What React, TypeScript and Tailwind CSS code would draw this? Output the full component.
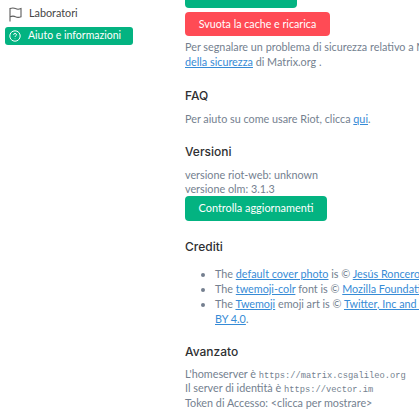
import React from 'react';

const link = "text-[#368bd6] underline";
const heading = "font-['Inter',sans-serif] text-[12px] leading-[18px] font-medium text-[#2e2f32]";
const mono = "font-['Liberation_Mono',monospace] text-[8.75px] leading-none";

function SideItem({ label, active, icon }: { label: string; active?: boolean; icon: React.ReactNode }) {
  return (
    <div className={`flex items-center h-[18px] rounded-[3px] pl-[4px] gap-[7px] ${active ? 'bg-[#03b381] text-white' : 'text-[#454545]'}`}>
      {icon}
      <span className={`${active ? 'text-[10.5px]' : 'text-[10.8px]'} whitespace-nowrap`}>{label}</span>
    </div>
  );
}

export default function App() {
  return (
    <div className="flex w-[419px] h-[418px] overflow-hidden bg-white font-['Lato',sans-serif]">
      {/* left panel */}
      <div className="w-[185px] shrink-0 pl-[5px] pr-[52px] pt-[4px] flex flex-col gap-[5px]">
        <SideItem
          label="Laboratori"
          icon={
            <svg width="13" height="15" viewBox="0 0 13 15" fill="none" stroke="#5c5c5c" strokeWidth="1.1" className="mt-[2px]">
              <path d="M1 14.5V1.5C3 .8 5 .8 6.5 1.6c1.6.8 3.4.8 5.5 0v8.2c-2 .8-3.9.8-5.5 0C5 9 3 9 1 9.8" />
            </svg>
          }
        />
        <SideItem
          active
          label="Aiuto e informazioni"
          icon={
            <svg width="12" height="12" viewBox="0 0 12 12" fill="none" stroke="white" strokeWidth="1">
              <circle cx="6" cy="6" r="5.2" />
              <path d="M4.6 4.8c0-1.8 2.9-1.8 2.9 0 0 1-1.5 1-1.5 2.1" />
              <circle cx="6" cy="8.6" r=".4" fill="white" stroke="none" />
            </svg>
          }
        />
      </div>

      {/* main content, scrolled */}
      <div className="flex-1 min-w-0 mt-[-16px] text-[10.8px] leading-[14.5px] text-[#747f8f]">
        <div className="h-[24px] w-[112px] rounded-[4px] bg-[#03b381]" />
        <button className="mt-[4px] block h-[24px] w-[145px] rounded-[4px] bg-[#ff4b55] text-white text-center text-[10.7px]">
          Svuota la cache e ricarica
        </button>
        <div className="mt-[4px] w-[300px]">
          <div className="whitespace-nowrap">Per segnalare un problema di sicurezza relativo a Matrix, leggi la</div>
          <div className="whitespace-nowrap">
            <a className={link}>della sicurezza</a> di Matrix.org .
          </div>
        </div>

        <h3 className={`${heading} mt-[18px]`}>FAQ</h3>
        <p className="mt-[7px] whitespace-nowrap">
          Per aiuto su come usare Riot, clicca <a className={link}>qui</a>.
        </p>

        <h3 className={`${heading} mt-[16px]`}>Versioni</h3>
        <div className="mt-[7px]">versione riot-web: unknown</div>
        <div>versione olm: 3.1.3</div>
        <button className="mt-[-1px] block h-[25px] w-[142px] rounded-[4px] bg-[#03b381] text-white text-center text-[10.9px]">
          Controlla aggiornamenti
        </button>

        <h3 className={`${heading} mt-[17px]`}>Crediti</h3>
        <ul className="mt-[10px] ml-[30px] w-[300px] list-disc leading-[15px] marker:text-[#747f8f]">
          <li className="whitespace-nowrap">
            The <a className={link}>default cover photo</a> is © <a className={link}>Jesús Roncero</a> used under the terms
          </li>
          <li className="whitespace-nowrap">
            The <a className={link}>twemoji-colr</a> font is © <a className={link}>Mozilla Foundation</a> used under the terms
          </li>
          <li>
            <div className="whitespace-nowrap">
              The <a className={link}>Twemoji</a> emoji art is © <a className={link}>Twitter, Inc and other contributors</a>
            </div>
            <div>
              <a className={link}>BY 4.0</a>.
            </div>
          </li>
        </ul>

        <h3 className={`${heading} mt-[17px]`}>Avanzato</h3>
        <div className="mt-[6px] whitespace-nowrap">
          L'homeserver è <span className={mono}>https://matrix.csgalileo.org</span>
        </div>
        <div className="whitespace-nowrap">
          Il server di identità è <span className={mono}>https://vector.im</span>
        </div>
        <div className="whitespace-nowrap">Token di Accesso: &lt;clicca per mostrare&gt;</div>
      </div>
    </div>
  );
}
